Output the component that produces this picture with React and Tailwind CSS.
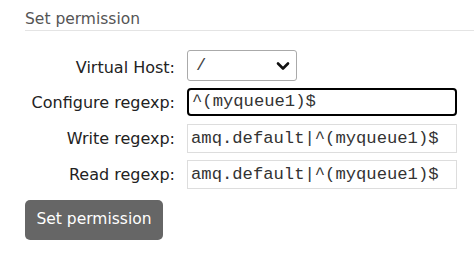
export default function App() {
  const label = "text-right text-[16px] text-[#222]";
  const mono = { fontFamily: '"Liberation Mono", "Courier New", monospace' };
  return (
    <div className="w-[474px] h-[261px] bg-white" style={{ fontFamily: '"DejaVu Sans", Verdana, sans-serif' }}>
      <div className="pl-[25px] pt-[9px]">
        <div className="text-[15.5px] text-[#555] leading-[20px] pb-[1px] border-b border-[#e4e4e4]">Set permission</div>
        <div className="grid grid-cols-[150px_auto] gap-x-[12px] items-center mt-[19px] w-[432px]">
          <div className={label + " pt-[5px]"}>Virtual Host:</div>
          <div className="w-[110px] h-[31px] border border-[#aaa] rounded-[3px] flex items-center justify-between pl-[8px] pr-[6px]">
            <span className="text-[17.2px] text-[#444]" style={mono}>/</span>
            <svg width="14" height="10" viewBox="0 0 14 10"><path d="M2 2.5 L7 7.5 L12 2.5" fill="none" stroke="#111" strokeWidth="2.6" strokeLinecap="round" strokeLinejoin="round" /></svg>
          </div>
          <div className={label + " mt-[8px]"}>Configure regexp:</div>
          <div className="mt-[7px] h-[28px] border-2 border-black rounded-[4px] flex items-center pl-[3px] text-[17.2px] text-[#333]" style={mono}>^(myqueue1)$</div>
          <div className={label + " mt-[9px]"}>Write regexp:</div>
          <div className="mt-[8px] h-[29px] border border-[#ddd] flex items-center pl-[3px] text-[17.2px] text-[#333]" style={mono}>amq.default|^(myqueue1)$</div>
          <div className={label + " mt-[8px]"}>Read regexp:</div>
          <div className="mt-[7px] h-[29px] border border-[#ddd] flex items-center pl-[3px] text-[17.2px] text-[#333]" style={mono}>amq.default|^(myqueue1)$</div>
        </div>
        <button className="mt-[11px] w-[138px] h-[40px] bg-[#666] rounded-[5px] text-white text-[15.5px]">Set permission</button>
      </div>
    </div>
  );
}
